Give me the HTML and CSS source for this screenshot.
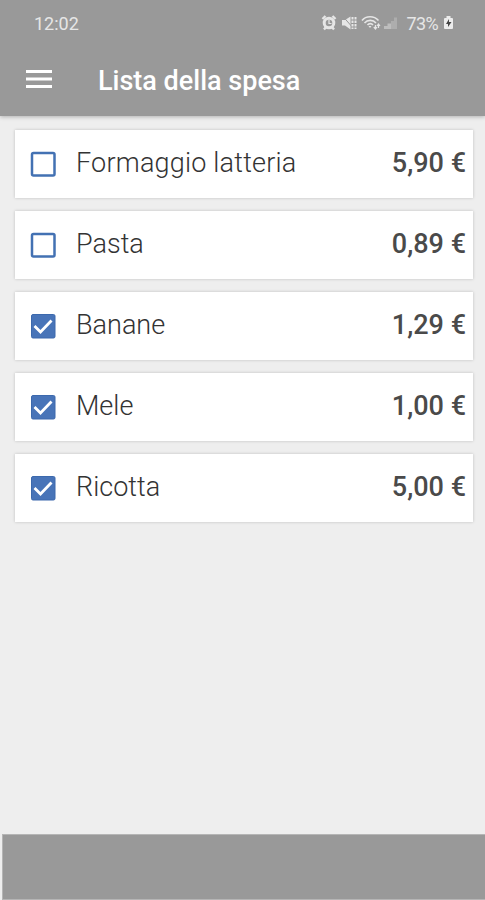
FILE: index.html
```html
<!DOCTYPE html>
<html lang="it">
<head>
<meta charset="utf-8">
<title>Lista della spesa</title>
<link rel="stylesheet" href="styles.css">
</head>
<body>
<header class="header">
  <div class="status">
    <span class="clock">12:02</span>
    <svg class="status-icons" width="77" height="18" viewBox="0 0 77 18" fill="none" stroke="#e6e6e6">
      <circle cx="8" cy="9" r="4.800" stroke-width="3"/>
      <path d="M1.500 5L4.500 2M14.500 5L11.500 2M3 15.500L5 13M13 15.500L11 13" stroke-width="2.400"/>
      <path d="M8 6v3.500h2.500" stroke-width="1.200"/>
      <path d="M21 6h3L29.500 2.500v13l-5.500-4h-3z" fill="#e6e6e6" stroke="none"/>
      <path d="M22 2.500L33 15" stroke="#999" stroke-width="1"/>
      <path d="M31.500 3v12M34.500 3v12" stroke-width="2" stroke-dasharray="2.500 1"/>
      <path d="M41 6.500C45 1.500 53 1.500 57.500 6.500M43.500 9C46.500 5.500 52 5.500 55 9M46.500 11C48 9.200 50.500 9.200 52 11" stroke-width="1.600"/>
      <path d="M47.500 12h3L49 14z" fill="#e6e6e6" stroke="none"/>
      <path d="M54.500 15v-4M52.800 13l1.700 2 1.500-2M57.500 10v4M56 12l1.500-2 1.500 2" stroke-width="1.200"/>
      <path d="M63 15v-3h3.500V9.500H70V15z" fill="#bdbdbd" stroke="none"/>
      <path d="M70 15V7h3V3.500h3V15z" fill="#adadad" stroke="none"/>
    </svg>
    <span class="level">73%</span>
    <svg class="battery" width="11" height="15" viewBox="0 0 11 15">
      <path d="M3.500 1h4v2H9q1 0 1 1v9q0 1-1 1H2q-1 0-1-1V4q0-1 1-1h1.500z" fill="#ececec"/>
      <path d="M6 4L3 9h2v3l3.500-5H6z" fill="#444"/>
    </svg>
  </div>
  <div class="toolbar">
    <svg class="menu" width="26" height="20" viewBox="0 0 26 20" fill="#fff">
      <path d="M0 1h26v3H0zM0 8.500h26v3H0zM0 16h26v3H0z"/>
    </svg>
    <h1 class="title">Lista della spesa</h1>
  </div>
</header>
<main class="list">
  <div class="item">
    <svg class="box" viewBox="0 0 26 26"><rect class="empty" x="2" y="2" width="22.500" height="22.500" rx="1.500"/></svg>
    <span class="name long">Formaggio latteria</span><span class="price">5,90 €</span>
  </div>
  <div class="item">
    <svg class="box" viewBox="0 0 26 26"><rect class="empty" x="2" y="2" width="22.500" height="22.500" rx="1.500"/></svg>
    <span class="name">Pasta</span><span class="price">0,89 €</span>
  </div>
  <div class="item">
    <svg class="box" viewBox="0 0 26 26"><rect class="full" x="1.500" y="1.500" width="23.500" height="23.500" rx="1.500"/><path class="tick" d="M4.500 13l6 6L21.500 7.500"/></svg>
    <span class="name">Banane</span><span class="price">1,29 €</span>
  </div>
  <div class="item">
    <svg class="box" viewBox="0 0 26 26"><rect class="full" x="1.500" y="1.500" width="23.500" height="23.500" rx="1.500"/><path class="tick" d="M4.500 13l6 6L21.500 7.500"/></svg>
    <span class="name">Mele</span><span class="price">1,00 €</span>
  </div>
  <div class="item">
    <svg class="box" viewBox="0 0 26 26"><rect class="full" x="1.500" y="1.500" width="23.500" height="23.500" rx="1.500"/><path class="tick" d="M4.500 13l6 6L21.500 7.500"/></svg>
    <span class="name">Ricotta</span><span class="price">5,00 €</span>
  </div>
</main>
<footer class="bottom"></footer>
</body>
</html>
```
FILE: styles.css
```css
* { box-sizing: border-box; }
body {
  margin: 0;
  height: 900px;
  display: flex;
  flex-direction: column;
  overflow: hidden;
  background: #eee;
  font-family: Roboto, "Liberation Sans", sans-serif;
}
.header {
  height: 116px;
  flex: none;
  background: #999;
  box-shadow: 0 1px 4px rgba(0, 0, 0, .25);
}
.status {
  height: 46px;
  display: flex;
  align-items: center;
  padding: 0 31px 0 34px;
  color: #e6e6e6;
  font-size: 18px;
}
.clock { margin-right: auto; }
.status-icons { margin-right: 8px; }
.level { letter-spacing: -.6px; }
.battery { margin-left: 5px; margin-top: -2px; }
.toolbar {
  height: 68px;
  display: flex;
  align-items: center;
  padding-left: 26px;
}
.menu { margin-top: -3px; }
.title {
  margin: 1px 0 0 46px;
  color: #fff;
  font-size: 27px;
  font-weight: 500;
  white-space: nowrap;
}
.list {
  flex: 1;
  display: flex;
  flex-direction: column;
  gap: 13px;
  padding: 14px 12px 0 15px;
}
.item {
  height: 68px;
  flex: none;
  display: flex;
  align-items: center;
  padding: 0 7px 3px 15px;
  background: #fff;
  box-shadow: 0 0 3px rgba(0, 0, 0, .2);
  color: #4a4a4a;
  font-size: 27px;
  line-height: 32px;
}
.box {
  width: 26px;
  height: 26px;
  margin: 3px 20px 0 0;
}
.empty { fill: #fff; stroke: #4371b3; stroke-width: 2.5; }
.full { fill: #4874b8; stroke: #3c69ad; }
.tick { fill: none; stroke: #fff; stroke-width: 2.8; }
.name { flex: 1; color: #333; font-weight: 300; white-space: nowrap; }
.long { letter-spacing: .2px; }
.price { font-weight: 500; white-space: nowrap; }
.bottom {
  height: 66px;
  flex: none;
  margin-left: 2px;
  background: #999;
  border: solid #b5b5b5;
  border-width: 1px 0 1px 1px;
}
```
